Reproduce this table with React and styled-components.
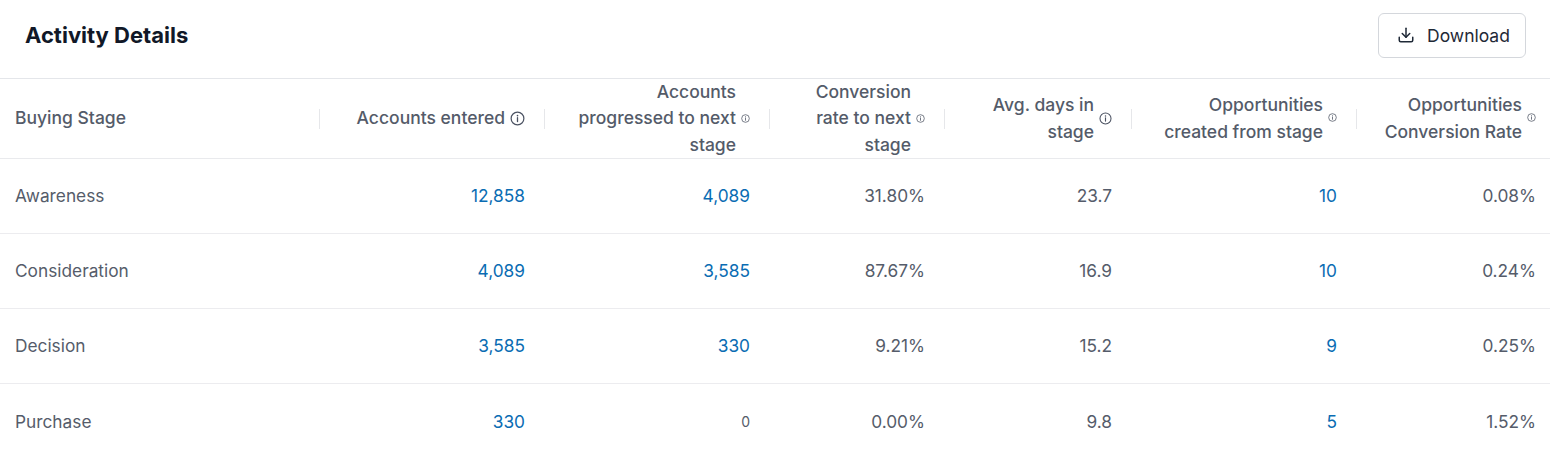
import React from "react";
import styled, { createGlobalStyle } from "styled-components";

const Global = createGlobalStyle`
  html, body { margin: 0; padding: 0; background: #ffffff; }
  body { font-family: Inter, "Noto Sans", sans-serif; -webkit-font-smoothing: antialiased; }
  * { box-sizing: border-box; }
`;

const Card = styled.section`
  width: 1550px;
  background: #fff;
`;

const TopBar = styled.header`
  display: flex;
  align-items: center;
  justify-content: space-between;
  height: 79px;
  padding: 0 24px 0 25px;
  border-bottom: 1px solid #e4e6ea;
`;

const Title = styled.h2`
  margin: 0;
  font-size: 22px;
  font-weight: 700;
  color: #111827;
  margin-top: -8px;
`;

const Button = styled.button`
  display: flex;
  align-items: center;
  gap: 12px;
  height: 45px;
  width: 148px;
  padding: 0 0 0 18px;
  margin-top: -8px;
  border: 1px solid #d4d7dc;
  border-radius: 6px;
  background: #fff;
  color: #1f2937;
  font-family: inherit;
  font-size: 17.5px;
  font-weight: 400;
  cursor: pointer;
`;

const Grid = styled.div`
  display: grid;
  grid-template-columns: 320px 225px 225px 175px 187px 225px 1fr;
`;

const HeadCell = styled.div`
  position: relative;
  display: flex;
  align-items: center;
  justify-content: ${(p) => (p.$left ? "flex-start" : "flex-end")};
  gap: 5px;
  height: 80px;
  padding: 0 ${(p) => (p.$last ? "14px" : "20px")} 0 ${(p) => (p.$left ? "15px" : "6px")};
  border-bottom: 1px solid #e9eaed;
  color: #545b69;
  font-size: 17.5px;
  font-weight: 500;
  line-height: 26.5px;
  text-align: right;
  white-space: nowrap;

  &::after {
    content: ${(p) => (p.$last ? "none" : '""')};
    position: absolute;
    right: 0;
    top: 50%;
    width: 1px;
    height: 20px;
    transform: translateY(-50%);
    background: #e6e7ea;
  }
`;

const HeadText = styled.span`
  display: block;
`;

const IconWrap = styled.span`
  display: inline-flex;
  flex-shrink: 0;
  margin-top: ${(p) => p.$dy || 0}px;
`;

const Cell = styled.div`
  display: flex;
  align-items: center;
  justify-content: ${(p) => (p.$left ? "flex-start" : "flex-end")};
  height: 75px;
  padding: 0 ${(p) => (p.$last ? "14px" : "20px")} 0 ${(p) => (p.$left ? "15px" : "8px")};
  border-bottom: ${(p) => (p.$noBorder ? "none" : "1px solid #ececef")};
  color: ${(p) => (p.$link ? "#0a6cb3" : "#555c6a")};
  font-size: ${(p) => (p.$small ? "14px" : "17.3px")};
  font-weight: 400;
  padding-bottom: 1px;
`;

const InfoIcon = ({ size }) => (
  <svg width={size} height={size} viewBox="0 0 16 16" fill="none">
    <circle cx="8" cy="8" r="6.8" stroke="#4b5262" strokeWidth="1.3" />
    <line x1="8" y1="7.2" x2="8" y2="11.2" stroke="#4b5262" strokeWidth="1.4" strokeLinecap="round" />
    <circle cx="8" cy="4.9" r="0.9" fill="#4b5262" />
  </svg>
);

const DownloadIcon = () => (
  <svg width="18" height="18" viewBox="0 0 24 24" fill="none" stroke="#1f2937" strokeWidth="2" strokeLinecap="round" strokeLinejoin="round">
    <path d="M12 3v12" />
    <path d="M7 10l5 5 5-5" />
    <path d="M3 15v4a2 2 0 0 0 2 2h14a2 2 0 0 0 2-2v-4" />
  </svg>
);

const columns = [
  { label: "Buying Stage", left: true },
  { label: "Accounts entered", icon: 15 },
  { label: <>Accounts<br />progressed to next<br />stage</>, icon: 9 },
  { label: <>Conversion<br />rate to next<br />stage</>, icon: 9 },
  { label: <>Avg. days in<br />stage</>, icon: 13, dy: 0 },
  { label: <>Opportunities<br />created from stage</>, icon: 9, dy: -2 },
  { label: <>Opportunities<br />Conversion Rate</>, icon: 9, dy: -2 },
];

const rows = [
  ["Awareness", "12,858", "4,089", "31.80%", "23.7", "10", "0.08%"],
  ["Consideration", "4,089", "3,585", "87.67%", "16.9", "10", "0.24%"],
  ["Decision", "3,585", "330", "9.21%", "15.2", "9", "0.25%"],
  ["Purchase", "330", "0", "0.00%", "9.8", "5", "1.52%"],
];

const linkCols = [1, 2, 5];

export default function App() {
  return (
    <>
      <Global />
      <Card>
        <TopBar>
          <Title>Activity Details</Title>
          <Button>
            <DownloadIcon />
            Download
          </Button>
        </TopBar>
        <Grid>
          {columns.map((c, i) => (
            <HeadCell key={i} $left={c.left} $last={i === columns.length - 1}>
              <HeadText>{c.label}</HeadText>
              {c.icon && (
                <IconWrap $dy={c.dy}>
                  <InfoIcon size={c.icon} />
                </IconWrap>
              )}
            </HeadCell>
          ))}
          {rows.map((r, ri) =>
            r.map((v, ci) => {
              const zero = v === "0" && ci === 2;
              return (
                <Cell
                  key={`${ri}-${ci}`}
                  $left={ci === 0}
                  $last={ci === r.length - 1}
                  $link={linkCols.includes(ci) && !zero}
                  $small={zero}
                  $noBorder={ri === rows.length - 1}
                >
                  {v}
                </Cell>
              );
            })
          )}
        </Grid>
      </Card>
    </>
  );
}
